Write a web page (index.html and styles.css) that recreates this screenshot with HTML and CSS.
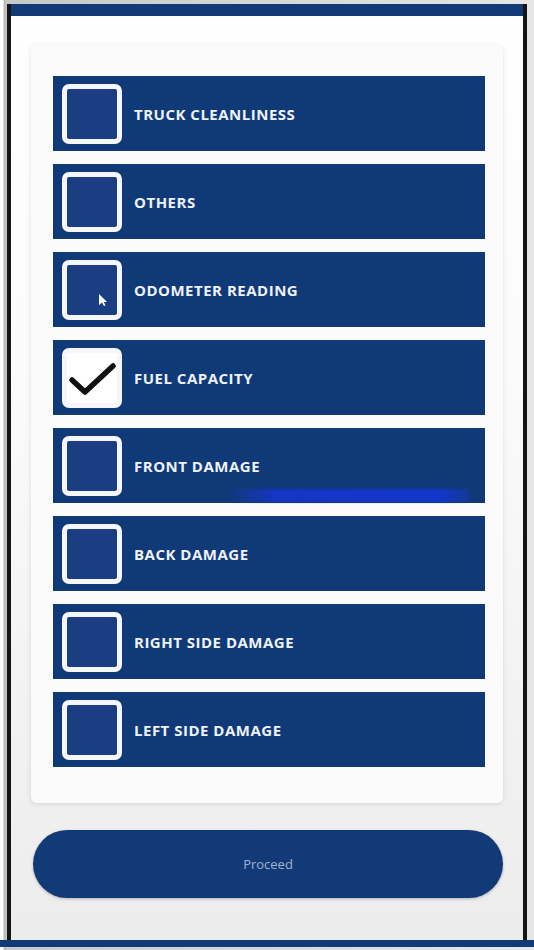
FILE: index.html
```html
<!DOCTYPE html>
<html>
<head>
<meta charset="utf-8">
<link rel="stylesheet" href="styles.css">
</head>
<body>
<div class="frame">
  <div class="topbar"></div>
  <div class="content">
    <div class="card">
      <div class="row"><span class="box"></span><span class="label">TRUCK CLEANLINESS</span></div>
      <div class="row"><span class="box"></span><span class="label">OTHERS</span></div>
      <div class="row"><span class="box cursor-box"><svg class="cursor" width="10" height="14" viewBox="0 0 10 14"><path d="M1 1 L1 12 L4 9.5 L6 13 L7.5 12.3 L5.7 9 L9 9 Z" fill="#fff"/></svg></span><span class="label">ODOMETER READING</span></div>
      <div class="row"><span class="box checked"><svg width="48" height="48" viewBox="0 0 48 48"><path d="M4 26 L17 38 L45 12" fill="none" stroke="#111" stroke-width="5.5" stroke-linecap="round" stroke-linejoin="round"/></svg></span><span class="label">FUEL CAPACITY</span></div>
      <div class="row progress"><span class="box"></span><span class="label">FRONT DAMAGE</span></div>
      <div class="row"><span class="box"></span><span class="label">BACK DAMAGE</span></div>
      <div class="row"><span class="box"></span><span class="label">RIGHT SIDE DAMAGE</span></div>
      <div class="row"><span class="box"></span><span class="label">LEFT SIDE DAMAGE</span></div>
    </div>
    <button class="proceed">Proceed</button>
  </div>
</div>
<div class="bottombar"></div>
</body>
</html>
```
FILE: styles.css
```css
html, body {
  margin: 0;
  padding: 0;
}
body {
  width: 534px;
  height: 950px;
  background: linear-gradient(to right, #ffffff 0, #ffffff 3px, #b8b8b8 4px, #c8c8c8 7px, #e6e6e6 528px);
  font-family: "Open Sans", "Liberation Sans", sans-serif;
  overflow: hidden;
}
.frame {
  margin: 4px 0 0 7px;
  width: 512px;
  height: 936px;
  border-left: 4px solid #151515;
  border-right: 4px solid #151515;
  background: linear-gradient(to bottom, #ffffff 0, #fbfbfb 40%, #ececec 100%);
  display: flex;
  flex-direction: column;
}
.topbar {
  height: 12px;
  background: #123a76;
  flex: none;
}
.content {
  padding: 29px 20px 0 20px;
  display: flex;
  flex-direction: column;
}
.card {
  background: #fbfbfb;
  border-radius: 6px;
  box-shadow: 0 1px 5px rgba(0,0,0,0.12);
  padding: 31px 18px 36px 22px;
  display: flex;
  flex-direction: column;
  gap: 13px;
}
.row {
  position: relative;
  height: 75px;
  background: #103977;
  display: flex;
  align-items: center;
  padding-left: 9px;
  gap: 12px;
}
.row.progress::after {
  content: "";
  position: absolute;
  left: 174px;
  right: 16px;
  bottom: 1px;
  height: 13px;
  background: linear-gradient(to right, rgba(20,60,200,0) 0, #1636c4 20%, #1436cc 88%, rgba(20,60,200,0.4) 100%);
  filter: blur(1px);
}
.box {
  position: relative;
  width: 50px;
  height: 50px;
  border: 5px solid #f4f6fb;
  border-radius: 7px;
  background: #1b3d82;
  flex: none;
  display: flex;
  align-items: center;
  justify-content: center;
}
.box.checked {
  background: #ffffff;
}
.cursor {
  position: absolute;
  left: 31px;
  top: 28px;
}
.label {
  color: #eef2fa;
  font-weight: 700;
  font-size: 15px;
  letter-spacing: 0.5px;
  position: relative;
  z-index: 1;
}
.proceed {
  margin-top: 27px;
  margin-left: 2px;
  width: 470px;
  height: 68px;
  border: none;
  border-radius: 34px;
  background: #123a78;
  color: #a2b2cc;
  font-family: "Open Sans", "Liberation Sans", sans-serif;
  font-size: 13px;
  box-shadow: 0 1px 3px rgba(0,0,0,0.25);
}
.bottombar {
  margin-top: 0;
  height: 7px;
  background: #123a76;
}
```
